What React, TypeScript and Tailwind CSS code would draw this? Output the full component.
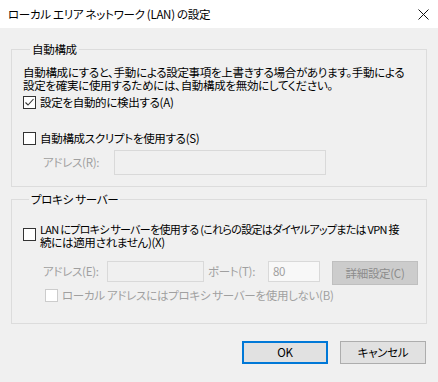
import React from "react";

function Box({ checked = false, disabled = false }: { checked?: boolean; disabled?: boolean }) {
  return (
    <span
      className={`flex h-[13px] w-[13px] shrink-0 items-center justify-center border bg-white ${
        disabled ? "border-[#cccccc]" : "border-[#333333]"
      }`}
    >
      {checked && (
        <svg width="11" height="11" viewBox="0 0 11 11">
          <polyline points="1.5,5.5 4,8 9.5,2" fill="none" stroke="#333" strokeWidth="1.1" />
        </svg>
      )}
    </span>
  );
}

export default function App() {
  return (
    <div
      className="h-[382px] w-[438px] overflow-hidden whitespace-nowrap bg-[#f0f0f0] text-[11.5px] leading-[13px] tracking-[-0.3px] text-black [font-feature-settings:'palt']"
      style={{ fontFamily: "'Noto Sans CJK JP', 'Noto Sans', sans-serif" }}
    >
      {/* Title bar */}
      <div className="flex h-[28px] items-center justify-between bg-white pl-[8px] pr-[9px]">
        <span>ローカル エリア ネットワーク (LAN) の設定</span>
        <svg width="11" height="11" viewBox="0 0 11 11">
          <path d="M0.5 0.5 L10.5 10.5 M10.5 0.5 L0.5 10.5" stroke="#111" strokeWidth="1" />
        </svg>
      </div>

      <div className="px-[11px]">
        {/* 自動構成 */}
        <fieldset className="mt-[13px] border border-[#dcdcdc] pb-[11px] pl-[11px]">
          <legend className="ml-[7px] px-[2px] leading-[16px]">自動構成</legend>
          <p className="pt-[9px]">
            自動構成にすると、手動による設定事項を上書きする場合があります。手動による
            <br />
            設定を確実に使用するためには、自動構成を無効にしてください。
          </p>
          <div className="mt-[3px] flex h-[15px] items-center gap-[4px]">
            <Box checked />
            <span>設定を自動的に検出する(A)</span>
          </div>
          <div className="mt-[21px] flex h-[15px] items-center gap-[4px]">
            <Box />
            <span>自動構成スクリプトを使用する(S)</span>
          </div>
          <div className="mt-[4px] flex items-center pl-[20px]">
            <span className="w-[71px] text-[#a0a0a0]">アドレス(R):</span>
            <div className="h-[25px] w-[212px] border border-[#d9d9d9] bg-[#f0f0f0]" />
          </div>
        </fieldset>

        {/* プロキシ サーバー */}
        <fieldset className="mt-[4px] border border-[#dcdcdc] pb-[21px] pl-[11px]">
          <legend className="ml-[6px] px-[2px] leading-[16px]">プロキシ サーバー</legend>
          <div className="flex items-start gap-[4px] pt-[16px]">
            <span className="mt-[5px]">
              <Box />
            </span>
            <p>
              <span className="text-[11px] tracking-[-0.7px]">
                LAN にプロキシ サーバーを使用する (これらの設定はダイヤルアップまたは VPN 接
              </span>
              <br />
              続には適用されません)(X)
            </p>
          </div>
          <div className="mt-[12px] flex items-start pl-[20px] text-[#a0a0a0]">
            <span className="flex h-[21px] w-[64px] items-center">アドレス(E):</span>
            <div className="h-[21px] w-[97px] border border-[#d9d9d9] bg-[#f0f0f0]" />
            <span className="ml-[4px] flex h-[21px] w-[60px] items-center">ポート(T):</span>
            <div className="flex h-[21px] w-[52px] items-center border border-[#d9d9d9] bg-[#f8f8f8] pl-[4px]">
              80
            </div>
            <div className="ml-[12px] flex h-[24px] w-[86px] items-center justify-center border border-[#bfbfbf] bg-[#cccccc] text-[#8c8c8c]">
              詳細設定(C)
            </div>
          </div>
          <div className="mt-[4px] flex h-[13px] items-center gap-[4px] pl-[22px] text-[#a0a0a0]">
            <Box disabled />
            <span>ローカル アドレスにはプロキシ サーバーを使用しない(B)</span>
          </div>
        </fieldset>

        {/* Buttons */}
        <div className="mr-[1px] mt-[17px] flex justify-end gap-[12px]">
          <button className="flex h-[23px] w-[86px] items-center justify-center border-2 border-[#0078d7] bg-[#e1e1e1]">
            OK
          </button>
          <button className="flex h-[23px] w-[86px] items-center justify-center border border-[#adadad] bg-[#e1e1e1]">
            キャンセル
          </button>
        </div>
      </div>
    </div>
  );
}
